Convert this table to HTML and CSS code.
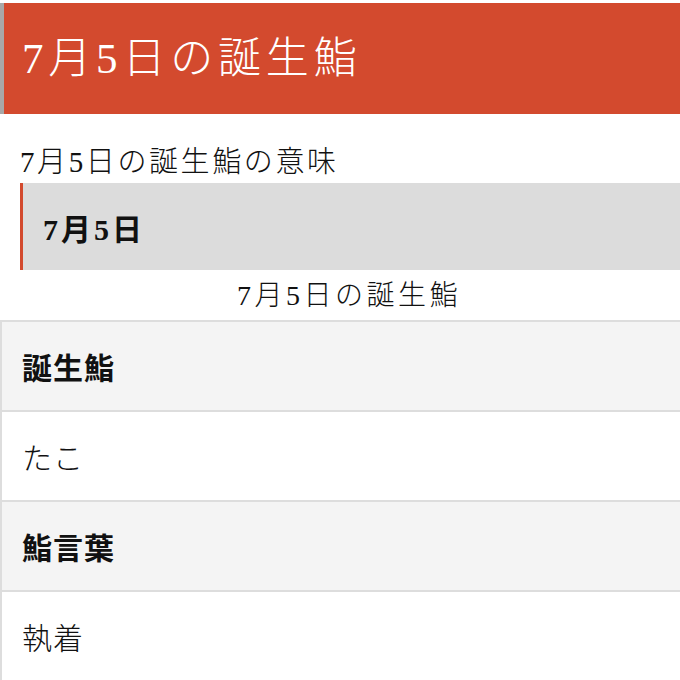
FILE: index.html
```html
<!DOCTYPE html>
<html lang="ja">
<head>
<meta charset="utf-8">
<title>7月5日の誕生鮨</title>
<link rel="stylesheet" href="styles.css">
</head>
<body>
<header class="page-header">
  <h1 class="page-title">7月5日の誕生鮨</h1>
</header>
<h2 class="section-title">7月5日の誕生鮨の意味</h2>
<div class="date-box"><h3 class="date-label">7月5日</h3></div>
<table class="sushi-table">
  <caption class="table-caption">7月5日の誕生鮨</caption>
  <tbody>
    <tr class="row-head"><th>誕生鮨</th></tr>
    <tr class="row-data"><td>たこ</td></tr>
    <tr class="row-head"><th>鮨言葉</th></tr>
    <tr class="row-data"><td>執着</td></tr>
  </tbody>
</table>
</body>
</html>
```
FILE: styles.css
```css
html, body {
  margin: 0;
  padding: 0;
  background: #ffffff;
}
body {
  font-family: "Liberation Serif", "Noto Sans CJK JP", serif;
  color: #111111;
}
.page-header {
  margin-top: 3px;
  height: 111px;
  background: #d34a2e;
  border-left: 4px solid #a8a8a8;
  box-sizing: border-box;
  padding-left: 18px;
  display: flex;
  align-items: center;
}
.page-title {
  margin: 0;
  color: #ffffff;
  font-size: 43px;
  font-weight: 300;
  letter-spacing: 4.8px;
  line-height: 1;
}
.section-title {
  margin: 0;
  padding-left: 20px;
  height: 69px;
  display: flex;
  align-items: center;
  font-size: 29px;
  font-weight: 300;
  letter-spacing: 2.6px;
  box-sizing: border-box;
  padding-top: 20px;
}
.date-box {
  margin-left: 20px;
  height: 87px;
  background: #dcdcdc;
  border-left: 3px solid #d34a2e;
  display: flex;
  align-items: center;
  padding-left: 20px;
}
.date-label {
  margin: 0;
  font-size: 30px;
  font-weight: 700;
  letter-spacing: 3px;
}
.sushi-table {
  width: 100%;
  border-collapse: collapse;
}
.table-caption {
  height: 50px;
  line-height: 52px;
  font-size: 28px;
  font-weight: 300;
  letter-spacing: 3.5px;
  text-align: center;
  padding-left: 18px;
}
.sushi-table th,
.sushi-table td {
  height: 88px;
  padding: 0 0 0 20px;
  text-align: left;
  font-size: 30px;
  border-top: 2px solid #dddddd;
  border-left: 2px solid #dddddd;
}
.sushi-table th {
  background: #f4f4f4;
  font-weight: 700;
  letter-spacing: 1px;
}
.sushi-table td {
  background: #ffffff;
  font-weight: 300;
  letter-spacing: 1px;
}
```
